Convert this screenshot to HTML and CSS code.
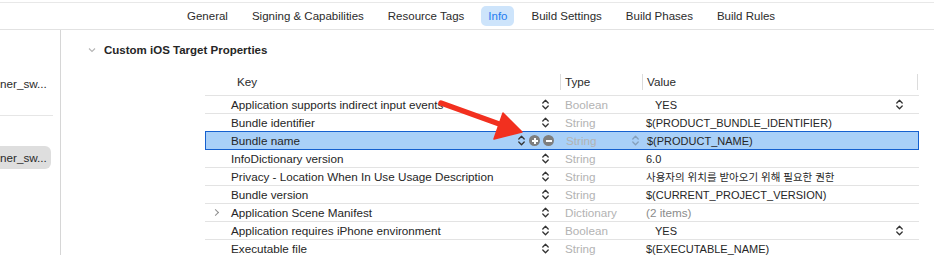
FILE: index.html
```html
<!DOCTYPE html>
<html lang="en">
<head>
    <meta charset="UTF-8">
    <title>Custom iOS Target Properties</title>
    <link rel="stylesheet" href="styles.css">
</head>
<body>

    <!-- Barra de pestañas -->
    <div class="top-gap"></div>
    <nav class="tabs">
        <span class="tab">General</span>
        <span class="tab">Signing &amp; Capabilities</span>
        <span class="tab">Resource Tags</span>
        <span class="tab active">Info</span>
        <span class="tab">Build Settings</span>
        <span class="tab">Build Phases</span>
        <span class="tab">Build Rules</span>
    </nav>

    <div class="main">
        <!-- Lista de targets -->
        <aside class="sidebar">
            <div class="side-item">ner_sw...</div>
            <div class="side-divider"></div>
            <div class="side-item selected">ner_sw...</div>
        </aside>

        <section class="editor">
            <div class="section-head">
                <svg class="section-chevron" width="8" height="6" viewBox="0 0 8 6"><path d="M1 1.5 L4 4.5 L7 1.5" fill="none" stroke="#b5b5b5" stroke-width="1.1"/></svg>
                <span>Custom iOS Target Properties</span>
            </div>

            <div class="plist">
                <div class="plist-head">
                    <div class="head-cell key-head">Key</div>
                    <div class="head-cell sep">Type</div>
                    <div class="head-cell sep last">Value</div>
                </div>

                <div class="row">
                    <div class="cell key"><span class="disc"></span><span class="key-text">Application supports indirect input events</span><i class="stepper"></i></div>
                    <div class="cell type">Boolean</div>
                    <div class="cell value bool"><span>YES</span><i class="stepper"></i></div>
                </div>
                <div class="row">
                    <div class="cell key"><span class="disc"></span><span class="key-text">Bundle identifier</span><i class="stepper"></i></div>
                    <div class="cell type">String</div>
                    <div class="cell value">$(PRODUCT_BUNDLE_IDENTIFIER)</div>
                </div>
                <div class="row selected">
                    <div class="cell key"><span class="disc"></span><span class="key-text">Bundle name</span><i class="stepper"></i><i class="round plus"></i><i class="round minus"></i></div>
                    <div class="cell type"><span>String</span><i class="stepper faint"></i></div>
                    <div class="cell value">$(PRODUCT_NAME)</div>
                </div>
                <div class="row">
                    <div class="cell key"><span class="disc"></span><span class="key-text">InfoDictionary version</span><i class="stepper"></i></div>
                    <div class="cell type">String</div>
                    <div class="cell value">6.0</div>
                </div>
                <div class="row">
                    <div class="cell key"><span class="disc"></span><span class="key-text">Privacy - Location When In Use Usage Description</span><i class="stepper"></i></div>
                    <div class="cell type">String</div>
                    <div class="cell value korean">사용자의 위치를 받아오기 위해 필요한 권한</div>
                </div>
                <div class="row">
                    <div class="cell key"><span class="disc"></span><span class="key-text">Bundle version</span><i class="stepper"></i></div>
                    <div class="cell type">String</div>
                    <div class="cell value">$(CURRENT_PROJECT_VERSION)</div>
                </div>
                <div class="row">
                    <div class="cell key"><span class="disc closed"></span><span class="key-text">Application Scene Manifest</span><i class="stepper"></i></div>
                    <div class="cell type">Dictionary</div>
                    <div class="cell value muted">(2 items)</div>
                </div>
                <div class="row">
                    <div class="cell key"><span class="disc"></span><span class="key-text">Application requires iPhone environment</span><i class="stepper"></i></div>
                    <div class="cell type">Boolean</div>
                    <div class="cell value bool"><span>YES</span><i class="stepper"></i></div>
                </div>
                <div class="row">
                    <div class="cell key"><span class="disc"></span><span class="key-text">Executable file</span><i class="stepper"></i></div>
                    <div class="cell type">String</div>
                    <div class="cell value">$(EXECUTABLE_NAME)</div>
                </div>
            </div>
        </section>
    </div>

    <!-- Flecha roja de anotación -->
    <svg class="annotation" width="934" height="255" viewBox="0 0 934 255">
        <line x1="441" y1="103" x2="502" y2="125" stroke="#f2301f" stroke-width="5.5" stroke-linecap="round"/>
        <polygon points="494,139 503,113 522,132" fill="#f2301f" stroke="#f2301f" stroke-width="1.5" stroke-linejoin="round"/>
    </svg>

</body>
</html>
```

FILE: styles.css
```css
body {
    margin: 0;
    width: 934px;
    height: 255px;
    overflow: hidden;
    position: relative;
    background: #ffffff;
    font-family: "Liberation Sans", Arial, sans-serif;
    font-size: 11.7px;
    color: #262626;
}

/* Pestañas */
.top-gap {
    height: 2px;
}
.tabs {
    display: flex;
    align-items: center;
    gap: 10px;
    height: 26px;
    padding-left: 180px;
    border-top: 1px solid #e8e8e8;
    border-bottom: 1px solid #e2e2e2;
    font-size: 11.5px;
}
.tab {
    padding: 3px 7px;
    line-height: 14px;
    border-radius: 5px;
    color: #2b2b2b;
}
.tab.active {
    background-color: #cde4fb;
    color: #1f7cf0;
}

/* Cuerpo */
.main {
    display: flex;
    height: 225px;
}
.sidebar {
    width: 61px;
    flex-shrink: 0;
    border-right: 1px solid #d6d6d6;
    padding-top: 47px;
    box-sizing: border-box;
}
.side-item {
    height: 14px;
    line-height: 14px;
    color: #2b2b2b;
}
.side-divider {
    width: 53px;
    height: 1px;
    margin-top: 24px;
    background-color: #e6e6e6;
}
.side-item.selected {
    width: 42px;
    height: 23px;
    line-height: 23px;
    margin-top: 30px;
    padding-right: 9px;
    background-color: #dedede;
    border-radius: 0 6px 6px 0;
}

.editor {
    flex: 1;
}
.section-head {
    display: flex;
    align-items: center;
    height: 14px;
    margin-top: 13px;
    padding-left: 27px;
    font-size: 11.5px;
    font-weight: bold;
    color: #262626;
}
.section-chevron {
    margin-right: 8px;
}

/* Tabla plist */
.plist {
    width: 714px;
    margin-left: 144px;
    margin-top: 16px;
}
.plist-head,
.row {
    display: grid;
    grid-template-columns: 355px 82px 277px;
}
.plist-head {
    border-bottom: 1px solid #e3e3e3;
    box-sizing: border-box;
    height: 23px;
    padding-top: 1px;
}
.head-cell {
    height: 16px;
    line-height: 16px;
    color: #2b2b2b;
    padding-left: 4px;
}
.key-head {
    padding-left: 32px;
}
.head-cell.sep {
    border-left: 1px solid #dcdcdc;
}
.head-cell.last {
    border-right: 1px solid #dcdcdc;
    margin-right: 1px;
}

.row {
    height: 18px;
    border-bottom: 1px solid #e3e3e3;
    box-sizing: border-box;
}
.row.selected {
    height: 19px;
    margin-top: -1px;
    background-color: #a9d0f8;
    border: 1px solid #1560cf;
}
.cell {
    display: flex;
    align-items: center;
    min-width: 0;
    white-space: nowrap;
    overflow: hidden;
}
.cell.key {
    padding-left: 7px;
    padding-right: 11px;
}
.row.selected .cell.key {
    padding-left: 6px;
    padding-right: 7px;
}
.disc {
    width: 19px;
    flex-shrink: 0;
    display: flex;
    align-items: center;
}
.disc.closed::before {
    content: "";
    width: 4px;
    height: 4px;
    margin-left: 1px;
    border-right: 1px solid #8e8e8e;
    border-top: 1px solid #8e8e8e;
    transform: rotate(45deg);
}
.key-text {
    flex: 1;
}
.cell.type {
    padding-left: 5px;
    padding-right: 4px;
    color: #b3b3b3;
}
.cell.type span {
    flex: 1;
}
.cell.value {
    padding-left: 4px;
    font-size: 11px;
}
.cell.value.bool {
    padding-left: 13px;
    padding-right: 16px;
}
.cell.value.bool span {
    flex: 1;
}
.cell.value.muted {
    color: #8c8c8c;
    font-size: 11.7px;
}
.cell.value.korean {
    font-family: "Liberation Sans", "Noto Sans CJK KR", sans-serif;
    font-size: 10.5px;
}

/* Iconos */
.stepper {
    width: 7px;
    height: 11px;
    flex-shrink: 0;
    background: url("data:image/svg+xml,%3Csvg xmlns='http://www.w3.org/2000/svg' width='7' height='11' viewBox='0 0 7 11'%3E%3Cpath d='M0.8 4 L3.5 1.3 L6.2 4 M0.8 7 L3.5 9.7 L6.2 7' fill='none' stroke='%23333' stroke-width='1.3' stroke-linecap='round' stroke-linejoin='round'/%3E%3C/svg%3E") no-repeat center;
}
.stepper.faint {
    opacity: 0.3;
}
.round {
    width: 11px;
    height: 11px;
    flex-shrink: 0;
    margin-left: 3px;
    border-radius: 50%;
    background-color: #7e7e7e;
    position: relative;
}
.row.selected .stepper + .round {
    margin-left: 4px;
}
.round::before,
.round.plus::after {
    content: "";
    position: absolute;
    left: 2.5px;
    top: 4.5px;
    width: 6px;
    height: 2px;
    background-color: #ffffff;
}
.round.plus::after {
    transform: rotate(90deg);
}

.annotation {
    position: absolute;
    left: 0;
    top: 0;
    pointer-events: none;
}
```
